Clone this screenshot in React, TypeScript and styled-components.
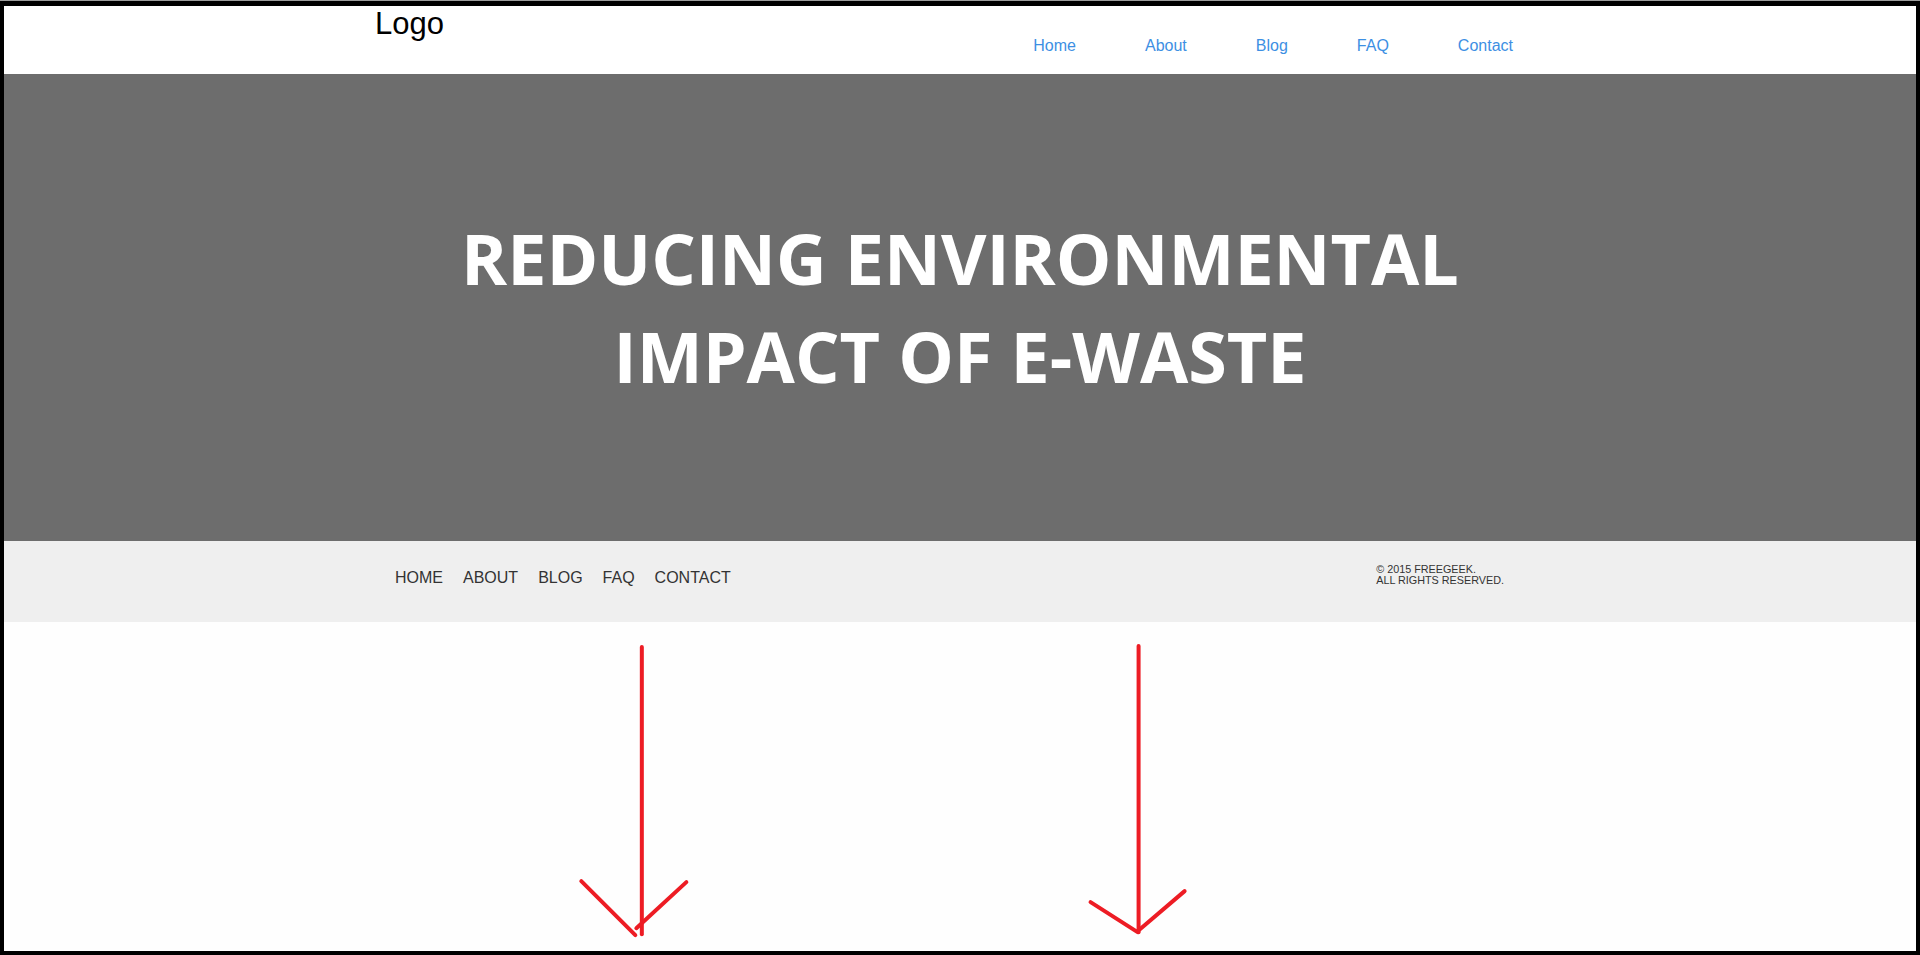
import React from 'react';
import styled, { createGlobalStyle } from 'styled-components';

const GlobalStyle = createGlobalStyle`
  html, body {
    margin: 0;
    padding: 0;
    height: 100%;
  }
  body {
    font-family: 'Liberation Sans', Arial, sans-serif;
    background: #000;
  }
  * {
    box-sizing: border-box;
  }
`;

const Window = styled.div`
  height: 100vh;
  display: flex;
  flex-direction: column;
  background: #000;
  border-top: 1px solid #9c9c9c;
  padding: 5px 4px 4px 4px;
`;

const Page = styled.div`
  flex: 1;
  display: flex;
  flex-direction: column;
  background: #fefefe;
  overflow: hidden;
`;

const Container = styled.div`
  width: 1170px;
  margin: 0 auto;
`;

const Header = styled.header`
  height: 68px;
  background: #fff;
`;

const HeaderInner = styled(Container)`
  display: flex;
  justify-content: space-between;
  align-items: flex-start;
`;

const Logo = styled.h1`
  margin: 0;
  font-size: 31px;
  font-weight: 400;
  color: #000;
  line-height: normal;
`;

const TopNav = styled.ul`
  display: flex;
  gap: 69px;
  list-style: none;
  margin: 0;
  padding: 31px 32px 0 0;
`;

const TopLink = styled.a`
  font-size: 16px;
  color: #3d8fe3;
  text-decoration: none;
`;

const Hero = styled.section`
  height: 467px;
  background: #6d6d6d;
  display: flex;
  align-items: center;
  justify-content: center;
`;

const HeroTitle = styled.h2`
  margin: 0;
  max-width: 1170px;
  font-family: 'Open Sans', 'Liberation Sans', sans-serif;
  font-weight: 700;
  font-size: 70px;
  line-height: 98px;
  color: #fff;
  text-align: center;
  text-transform: uppercase;
`;

const Footer = styled.footer`
  height: 81px;
  background: #efefef;
`;

const FooterInner = styled(Container)`
  display: flex;
  justify-content: space-between;
  align-items: flex-start;
  padding: 28px 41px 0 20px;
`;

const FooterNav = styled.ul`
  display: flex;
  gap: 20px;
  list-style: none;
  margin: 0;
  padding: 0;
`;

const FooterLink = styled.a`
  font-size: 16px;
  color: #333;
  text-decoration: none;
  text-transform: uppercase;
`;

const Copyright = styled.p`
  margin: -5px 0 0;
  font-size: 10.8px;
  line-height: 11px;
  color: #333;
  text-transform: uppercase;
`;

const Annotations = styled.div`
  flex: 1;
  display: flex;
`;

const ArrowCanvas = styled.svg`
  width: 100%;
  height: 100%;
`;

type Arrow = { x: number; top: number; bottom: number; left: [number, number, number, number]; right: [number, number, number, number] };

const arrows: Arrow[] = [
  { x: 641.5, top: 647, bottom: 934, left: [581, 881, 635, 935], right: [686, 882, 636, 928] },
  { x: 1138, top: 646, bottom: 932, left: [1090, 902, 1137, 932], right: [1184, 891, 1137, 931] },
];

const topLinks = ['Home', 'About', 'Blog', 'FAQ', 'Contact'];

export default function App() {
  return (
    <>
      <GlobalStyle />
      <Window>
        <Page>
          <Header>
            <HeaderInner>
              <Logo>Logo</Logo>
              <TopNav>
                {topLinks.map((l) => (
                  <li key={l}>
                    <TopLink href="#">{l}</TopLink>
                  </li>
                ))}
              </TopNav>
            </HeaderInner>
          </Header>
          <Hero>
            <HeroTitle>Reducing environmental impact of e-waste</HeroTitle>
          </Hero>
          <Footer>
            <FooterInner>
              <FooterNav>
                {topLinks.map((l) => (
                  <li key={l}>
                    <FooterLink href="#">{l}</FooterLink>
                  </li>
                ))}
              </FooterNav>
              <Copyright>
                © 2015 Freegeek.
                <br />
                All rights reserved.
              </Copyright>
            </FooterInner>
          </Footer>
          <Annotations>
            <ArrowCanvas viewBox="4 622 1911 329" preserveAspectRatio="xMinYMin meet">
              {arrows.map((a, i) => (
                <g key={i} stroke="#ed1c24" strokeWidth={4} strokeLinecap="round" fill="none">
                  <line x1={a.x} y1={a.top} x2={a.x} y2={a.bottom} />
                  <line x1={a.left[0]} y1={a.left[1]} x2={a.left[2]} y2={a.left[3]} />
                  <line x1={a.right[0]} y1={a.right[1]} x2={a.right[2]} y2={a.right[3]} />
                </g>
              ))}
            </ArrowCanvas>
          </Annotations>
        </Page>
      </Window>
    </>
  );
}
